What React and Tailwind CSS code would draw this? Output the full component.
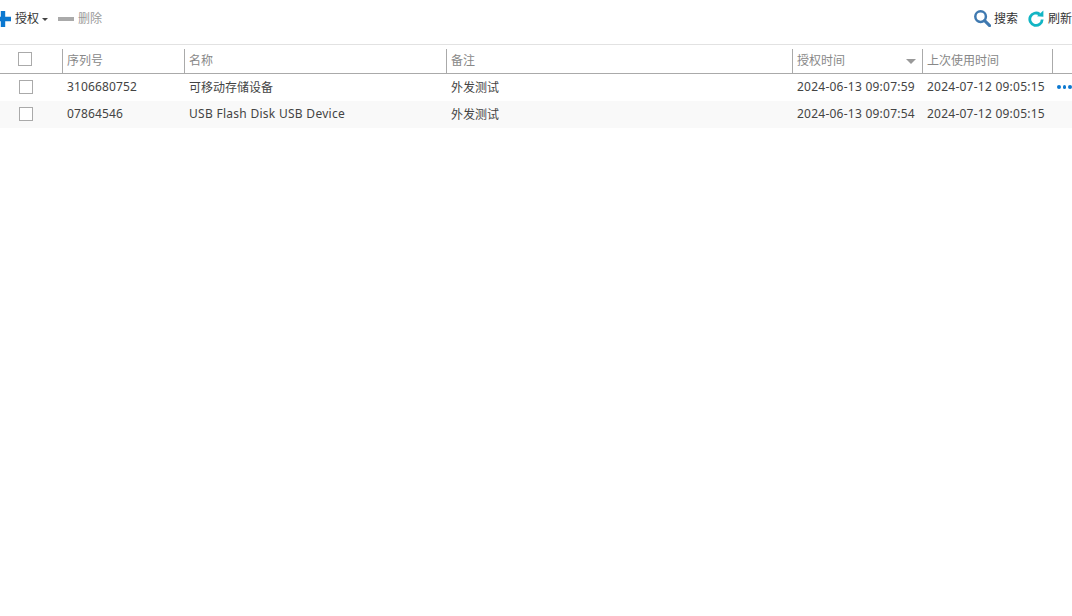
const font = { fontFamily: '"Noto Sans", "Noto Sans CJK SC", sans-serif' };

const columns = 'grid grid-cols-[62px_122px_262px_346px_130px_130px_20px]';

const rows = [
  { id: '3106680752', name: '可移动存储设备', note: '外发测试', granted: '2024-06-13 09:07:59', used: '2024-07-12 09:05:15', more: true },
  { id: '07864546', name: 'USB Flash Disk USB Device', nameLatin: true, note: '外发测试', granted: '2024-06-13 09:07:54', used: '2024-07-12 09:05:15' },
];

function HeadCell({ label, children }) {
  return (
    <div className="h-[24px] mt-[4px] border-l border-[#aaaaaa] pl-[4px] flex items-center justify-between text-[12px] text-[#888888]">
      <span>{label}</span>
      {children}
    </div>
  );
}

function Cell({ className = '', children }) {
  return <div className={`pl-[5px] whitespace-nowrap overflow-hidden ${className}`}>{children}</div>;
}

export default function App() {
  return (
    <div className="w-[1072px] h-[616px] bg-white overflow-hidden text-[#444444]" style={font}>
      {/* Toolbar */}
      <div className="h-[44px] flex items-center justify-between pb-[7px] text-[12px]">
        <div className="flex items-center">
          <svg width="11" height="16" viewBox="0 0 11 16" className="mr-[4px]">
            <path d="M-1 8h12M3 0v16" stroke="#0b78d0" strokeWidth="4.4" fill="none" />
          </svg>
          <span className="text-[#333333]">授权</span>
          <span className="ml-[3px] mt-[1px] w-0 h-0 border-x-[3px] border-x-transparent border-t-[3px] border-t-[#444444]" />
          <span className="ml-[10px] w-[16px] h-[4px] bg-[#aaaaaa]" />
          <span className="ml-[4px] text-[#999999]">删除</span>
        </div>
        <div className="flex items-center">
          <svg width="17" height="17" viewBox="0 0 17 17" className="mr-[3px]">
            <circle cx="6.6" cy="6.6" r="5.3" stroke="#3f79b0" strokeWidth="2.5" fill="none" />
            <path d="M10.6 10.6l5 5" stroke="#3f79b0" strokeWidth="3" strokeLinecap="round" />
          </svg>
          <span className="text-[#333333]">搜索</span>
          <svg width="17" height="17" viewBox="0 0 17 17" className="ml-[10px] mr-[3px]">
            <path d="M11.6 4.2A6.2 6.2 0 1 0 14.2 9.5" stroke="#12b5c4" strokeWidth="2.8" fill="none" />
            <path d="M9 6.2L15.4 6.8V0.4z" fill="#12b5c4" />
          </svg>
          <span className="text-[#333333] w-[24px] whitespace-nowrap">刷新</span>
        </div>
      </div>

      {/* Table head */}
      <div className={`${columns} h-[30px] border-t border-t-[#e2e2e2] border-b border-b-[#aaaaaa]`}>
        <div className="pl-[18px] pt-[7px]">
          <div className="w-[14px] h-[14px] border border-[#aaaaaa]" />
        </div>
        <HeadCell label="序列号" />
        <HeadCell label="名称" />
        <HeadCell label="备注" />
        <HeadCell label="授权时间">
          <span className="mr-[6px] w-0 h-0 border-x-[5px] border-x-transparent border-t-[5px] border-t-[#999999]" />
        </HeadCell>
        <HeadCell label="上次使用时间" />
        <HeadCell label="" />
      </div>

      {/* Rows */}
      {rows.map((row, i) => (
        <div key={row.id} className={`${columns} h-[27px] pb-[2px] items-center text-[12px] ${i % 2 ? 'bg-[#f9f9f9]' : 'bg-white'}`}>
          <div className="pl-[19px]">
            <div className="w-[14px] h-[14px] border border-[#aaaaaa] bg-white" />
          </div>
          <Cell className="tracking-[0.14px]">{row.id}</Cell>
          <Cell className={row.nameLatin ? 'tracking-[0.28px]' : 'pt-[2px]'}>{row.name}</Cell>
          <Cell className="pt-[2px]">{row.note}</Cell>
          <Cell className="tracking-[0.24px]">{row.granted}</Cell>
          <Cell className="tracking-[0.24px]">{row.used}</Cell>
          <div className="pl-[5px] flex gap-[2px]">
            {row.more && [0, 1, 2].map((d) => <span key={d} className="w-[4px] h-[4px] rounded-full bg-[#0b78d0]" />)}
          </div>
        </div>
      ))}
    </div>
  );
}
